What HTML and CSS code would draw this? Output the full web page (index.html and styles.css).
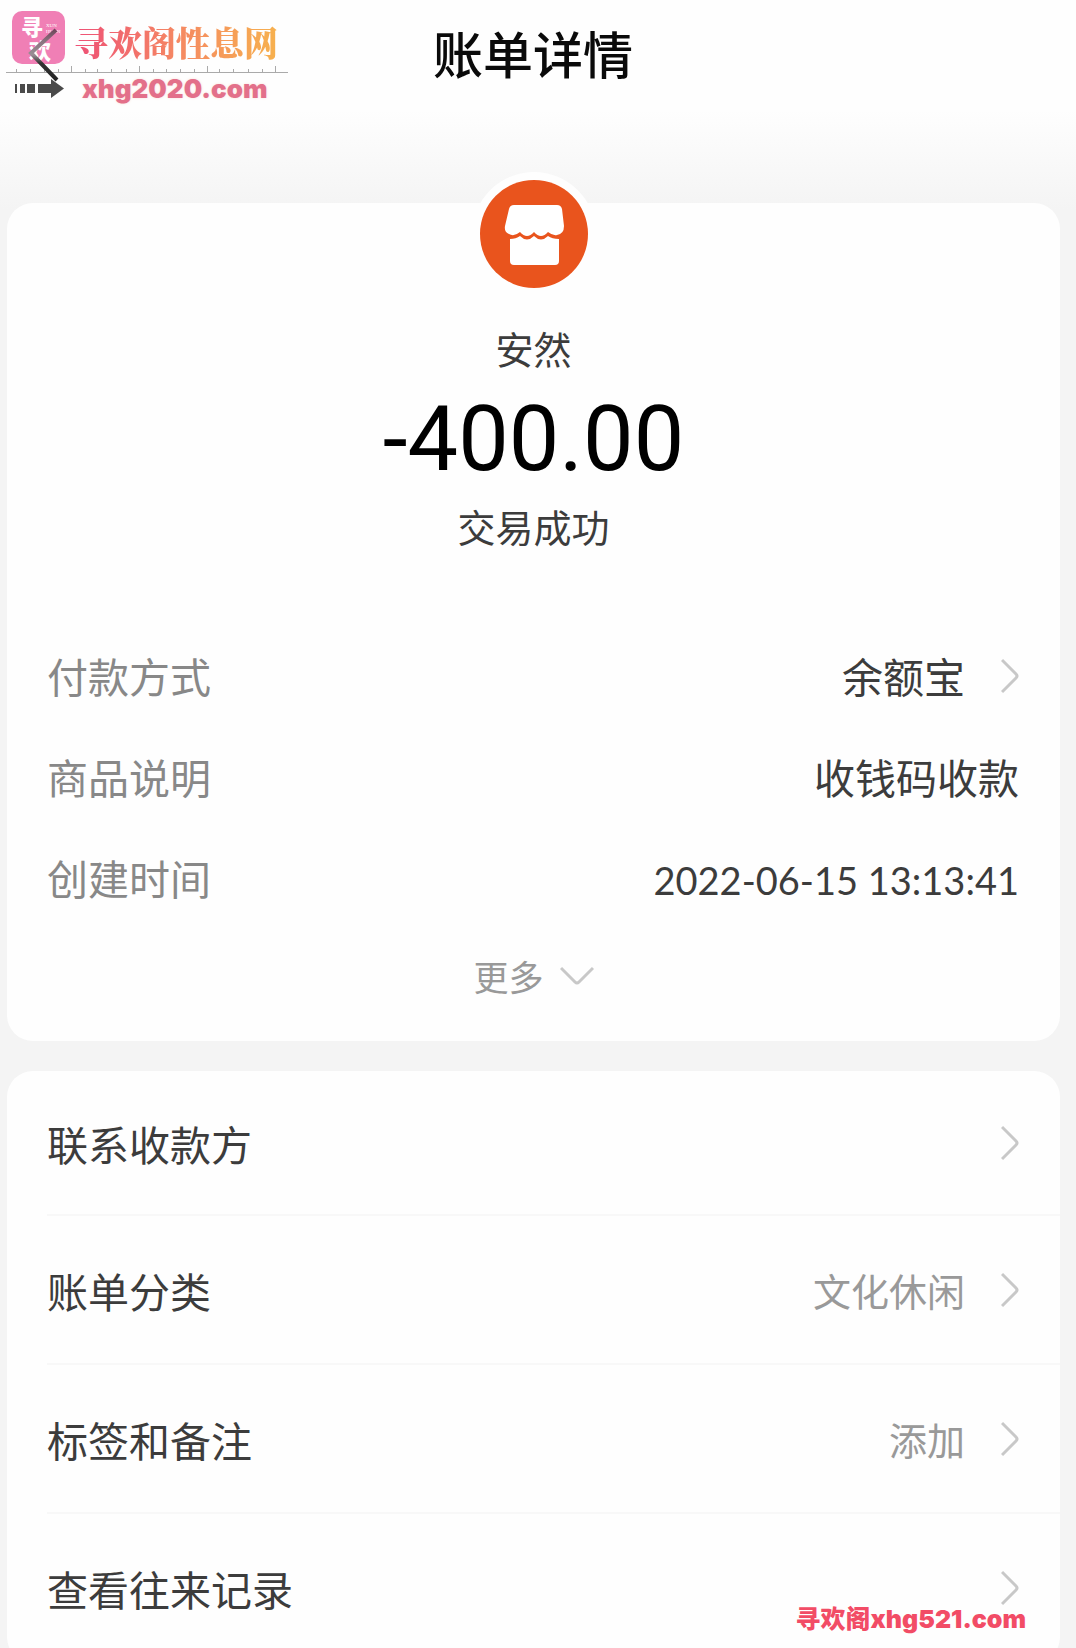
FILE: index.html
```
<!DOCTYPE html>
<html lang="zh-CN">
<head>
    <meta charset="UTF-8">
    <meta name="viewport" content="width=device-width, initial-scale=1.0">
    <title>账单详情</title>
    <link rel="stylesheet" href="styles.css">
</head>
<body>
    <header class="header">
        <button class="back" type="button" aria-label="返回">
            <svg width="34" height="58" viewBox="0 0 34 58" fill="none" stroke-width="4">
                <defs>
                    <linearGradient id="fade" gradientUnits="userSpaceOnUse" x1="0" y1="2" x2="0" y2="56">
                        <stop offset="0" stop-color="#6b3f55"/>
                        <stop offset="0.25" stop-color="#8a7480"/>
                        <stop offset="0.5" stop-color="#9a8f95"/>
                        <stop offset="0.65" stop-color="#333"/>
                        <stop offset="1" stop-color="#222"/>
                    </linearGradient>
                </defs>
                <path d="M29 4L4 27L30 54" stroke="url(#fade)"/>
            </svg>
        </button>
        <h1>账单详情</h1>
    </header>

    <div class="site-mark">
        <div class="mark-logo">
            <span class="logo-char">寻</span>
            <span class="logo-char second">欢</span>
            <span class="logo-latin">XUN<br>HUAN</span>
        </div>
        <p class="mark-name">寻欢阁性息网</p>
        <svg class="mark-ruler" width="282" height="8" viewBox="0 0 282 8" stroke="#aaa" fill="none">
            <path d="M0 6.5H282"/>
            <path d="M10.500 3V6M24.500 3V6M38.500 3V6M52.500 3V6M79.500 3V6M91.500 3V6M105.500 3V6M120.500 3V6M147.500 3V6M160.500 3V6M174.500 3V6M188.500 3V6M213.500 3V6M227.500 3V6M242.500 3V6M256.500 3V6"/>
            <path d="M65.500 0V6M133.500 0V6M201.500 0V6M269.500 0V6"/>
        </svg>
        <svg class="mark-arrow" width="49" height="20" viewBox="0 0 49 20" fill="#4a4a4a">
            <path d="M0 5H2V14H0zM5 5H10V14H5zM12 5H20V14H12zM23 5H36V0L49 9.500L36 19V14H23z"/>
        </svg>
        <p class="mark-url">xhg2020.com</p>
    </div>

    <main>
        <section class="card bill">
            <div class="avatar">
                <svg width="108" height="108" viewBox="0 0 108 108">
                    <circle cx="54" cy="54" r="54" fill="#e9541d"/>
                    <path d="M34 25H77Q81 25 82 29L84 46Q84 54 77 55Q73 56 68 52Q61 60 54 52Q47 60 40 52Q34 57 29 54Q24 52 25 46L29 29Q30 25 34 25Z" fill="#fff"/>
                    <path d="M30 59Q36 59 40 56Q47 63 54 56Q61 63 68 56Q72 59 79 59V81Q79 85 75 85H34Q30 85 30 81Z" fill="#fff"/>
                </svg>
            </div>
            <p class="payee">安然</p>
            <p class="amount">-400.00</p>
            <p class="status">交易成功</p>

            <dl class="details">
                <div class="detail">
                    <dt>付款方式</dt>
                    <dd>
                        余额宝
                        <svg class="chevron" width="18" height="36" viewBox="0 0 18 36"><path d="M1 2L15 16Q17 18 15 20L1 34"/></svg>
                    </dd>
                </div>
                <div class="detail">
                    <dt>商品说明</dt>
                    <dd>收钱码收款</dd>
                </div>
                <div class="detail">
                    <dt>创建时间</dt>
                    <dd class="time">2022-06-15 13:13:41</dd>
                </div>
            </dl>

            <button class="more" type="button">
                更多
                <svg class="chevron" width="34" height="20" viewBox="0 0 34 20"><path d="M1 2L15 16Q17 18 19 16L33 2"/></svg>
            </button>
        </section>

        <nav class="card links">
            <a class="link" href="#contact">
                <span>联系收款方</span>
                <svg class="chevron" width="18" height="36" viewBox="0 0 18 36"><path d="M1 2L15 16Q17 18 15 20L1 34"/></svg>
            </a>
            <a class="link" href="#category">
                <span>账单分类</span>
                <span class="hint">文化休闲</span>
                <svg class="chevron" width="18" height="36" viewBox="0 0 18 36"><path d="M1 2L15 16Q17 18 15 20L1 34"/></svg>
            </a>
            <a class="link" href="#tags">
                <span>标签和备注</span>
                <span class="hint">添加</span>
                <svg class="chevron" width="18" height="36" viewBox="0 0 18 36"><path d="M1 2L15 16Q17 18 15 20L1 34"/></svg>
            </a>
            <a class="link" href="#records">
                <span>查看往来记录</span>
                <svg class="chevron" width="18" height="36" viewBox="0 0 18 36"><path d="M1 2L15 16Q17 18 15 20L1 34"/></svg>
            </a>
        </nav>
    </main>

    <p class="corner-mark">寻欢阁xhg521.com</p>
</body>
</html>
```
FILE: styles.css
```
* {
    box-sizing: border-box;
}
body {
    position: relative;
    margin: 0;
    height: 100vh;
    overflow: hidden;
    background: #f3f3f3 linear-gradient(#fefefe 110px, #f4f4f4 210px) no-repeat;
    font-family: "Noto Sans CJK SC", sans-serif;
    color: #3c3c3c;
}
h1, p, dl, dd {
    margin: 0;
}
button {
    border: none;
    background: none;
    padding: 0;
    font-family: inherit;
    cursor: pointer;
}

/* Header */
.header {
    height: 203px;
    padding: 17px 10px 0 0;
    text-align: center;
}
.header h1 {
    font-size: 50px;
    line-height: 70px;
    font-weight: 500;
    color: #0a0a0a;
}
.back {
    position: absolute;
    z-index: 2;
    left: 27px;
    top: 26px;
}
.back svg {
    display: block;
}

/* Cards */
.card {
    margin: 0 16px 30px 7px;
    background-color: #fefefe;
    border-radius: 26px;
}
.bill {
    display: flex;
    flex-direction: column;
    align-items: center;
    padding-bottom: 20px;
}
.avatar {
    margin-top: -31px;
    padding: 8px;
    border-radius: 50%;
    background-color: #fefefe;
}
.avatar svg {
    display: block;
}
.payee,
.status {
    font-size: 38px;
    line-height: 56px;
}
.payee {
    margin-top: 24px;
}
.amount {
    margin: 16px 0 10px;
    font-family: Roboto, sans-serif;
    font-size: 90px;
    line-height: 96px;
    color: #000;
}
.details {
    width: 100%;
    margin-top: 71px;
    padding: 0 41px 0 40px;
    font-size: 41px;
}
.detail {
    display: flex;
    justify-content: space-between;
    align-items: baseline;
    line-height: 101px;
}
.detail dt {
    color: #888;
}
.detail dd {
    display: flex;
    align-items: center;
    gap: 36px;
}
.detail .time {
    font-family: Lato, sans-serif;
    font-size: 38px;
}
.chevron {
    flex: none;
    fill: none;
    stroke: #c8c8c8;
    stroke-width: 3;
}
.more {
    display: flex;
    align-items: center;
    gap: 16px;
    font-size: 35px;
    line-height: 90px;
    color: #999;
}

/* Links */
.links {
    margin-bottom: 0;
    padding-left: 40px;
}
.link {
    display: flex;
    align-items: center;
    gap: 36px;
    min-height: 149px;
    padding-right: 41px;
    border-bottom: 2px solid #f8f8f8;
    font-size: 41px;
    color: inherit;
    text-decoration: none;
}
.link:first-child {
    min-height: 145px;
}
.link span:first-child {
    flex: 1;
}
.hint {
    font-size: 38px;
    color: #999;
}

/* Marks over the page */
.site-mark {
    position: absolute;
    left: 6px;
    top: 11px;
    width: 282px;
    display: grid;
    grid-template-columns: 68px 1fr;
}
.mark-logo {
    position: relative;
    width: 53px;
    height: 53px;
    margin-left: 6px;
    border-radius: 10px;
    background-color: #f07fb5;
    color: #fff;
    font-weight: 900;
}
.logo-char {
    position: absolute;
    left: 9px;
    top: 2px;
    font-size: 22px;
    line-height: 24px;
}
.logo-char.second {
    left: 17px;
    top: 26px;
}
.logo-latin {
    position: absolute;
    left: 34px;
    top: 12px;
    font: 5px/6px "Liberation Serif", serif;
}
.mark-name {
    font-family: "Noto Serif CJK SC", "Noto Sans CJK SC", serif;
    font-size: 34px;
    line-height: 62px;
    font-weight: 900;
    white-space: nowrap;
    color: transparent;
    background: linear-gradient(90deg, #ee4f76, #f58a62 50%, #f7b54c);
    -webkit-background-clip: text;
    background-clip: text;
}
.mark-ruler {
    grid-column: 1 / 3;
    margin-top: -7px;
}
.mark-arrow {
    margin: 5px 0 0 9px;
}
.mark-url {
    padding-left: 8px;
    font: 900 26px/30px Inter, sans-serif;
    color: #e3708a;
    text-shadow: 0 0 3px #fbe0d8;
}
.corner-mark {
    position: absolute;
    right: 50px;
    bottom: 12px;
    font: 900 25px/34px Inter, "Noto Sans CJK SC", sans-serif;
    color: #f24c66;
}
```
